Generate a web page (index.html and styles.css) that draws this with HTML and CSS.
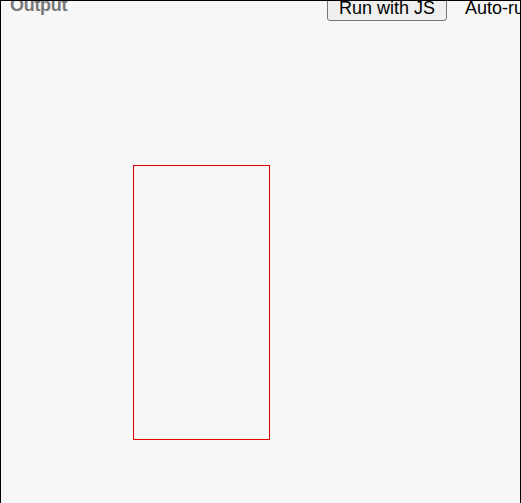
FILE: index.html
```html
<!DOCTYPE html>
<html>
<head>
<meta charset="utf-8">
<link rel="stylesheet" href="styles.css">
</head>
<body>
<div class="panel">
  <div class="header">
    <div class="title">Output</div>
    <button class="run">Run with JS</button>
    <label class="auto"><span>Auto-run JS</span><input type="checkbox" checked></label>
  </div>
  <div class="stage">
    <div class="box"></div>
  </div>
</div>
</body>
</html>
```
FILE: styles.css
```css
html, body {
  margin: 0;
  padding: 0;
  background: #f7f7f7;
}
.panel {
  box-sizing: border-box;
  width: 521px;
  height: 503px;
  border: 1px solid #000;
  border-bottom: none;
  background: #f7f7f7;
  overflow: hidden;
  font-family: "Liberation Sans", Arial, sans-serif;
}
.header {
  display: flex;
  align-items: flex-start;
  margin-top: -5px;
  padding-left: 9px;
  white-space: nowrap;
}
.title {
  width: 317px;
  flex: none;
  margin-top: -1px;
  font-size: 18px;
  line-height: 20px;
  font-weight: bold;
  color: #777;
  letter-spacing: -0.3px;
}
.run {
  flex: none;
  margin: 0 18px 0 0;
  padding: 1px 11px;
  font-family: "Liberation Sans", Arial, sans-serif;
  font-size: 18px;
  line-height: 21px;
  color: #000;
  background: #efefef;
  border: 1px solid #767676;
  border-radius: 3px;
}
.auto {
  flex: none;
  margin-top: 2px;
  font-size: 18px;
  line-height: 21px;
  color: #000;
}
.stage {
  padding: 144px 0 0 132px;
}
.box {
  width: 135px;
  height: 273px;
  border: 1px solid #e00000;
}
```
